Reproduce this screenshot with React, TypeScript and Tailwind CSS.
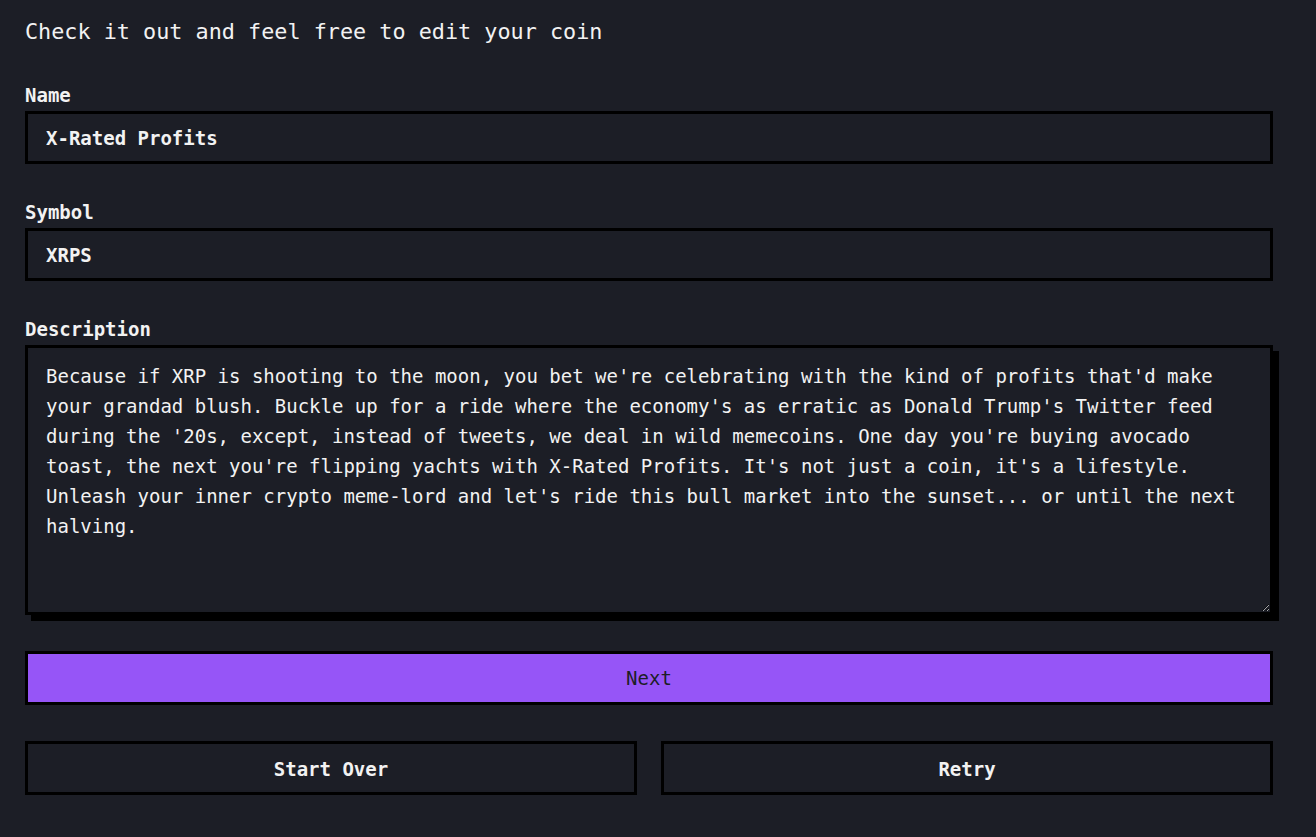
// Coin review step: edit the generated name, symbol and blurb before moving on.
const DESCRIPTION =
  "Because if XRP is shooting to the moon, you bet we're celebrating with the kind of profits that'd make your grandad blush. Buckle up for a ride where the economy's as erratic as Donald Trump's Twitter feed during the '20s, except, instead of tweets, we deal in wild memecoins. One day you're buying avocado toast, the next you're flipping yachts with X-Rated Profits. It's not just a coin, it's a lifestyle. Unleash your inner crypto meme-lord and let's ride this bull market into the sunset... or until the next halving.";

const mono = "font-['DejaVu_Sans_Mono',monospace]";

function Field({ label, value }: { label: string; value: string }) {
  return (
    <label className="flex flex-col gap-1">
      <span className="text-[19px] leading-6 font-semibold text-[#f2f2f2]">{label}</span>
      <input
        defaultValue={value}
        className={`${mono} h-[53px] border-[3px] border-black bg-[#1c1e26] px-[18px] pt-px text-[19px] font-semibold text-[#f2f2f2] outline-none`}
      />
    </label>
  );
}

export default function App() {
  return (
    <div className={`${mono} min-h-screen bg-[#1c1e26] pt-[17px] pr-[43px] pb-10 pl-[25px] text-[#f2f2f2]`}>
      <div className="flex flex-col gap-9">
        <h1 className="text-[21.8px] leading-[30px] font-normal">
          Check it out and feel free to edit your coin
        </h1>

        <Field label="Name" value="X-Rated Profits" />
        <Field label="Symbol" value="XRPS" />

        <label className="flex flex-col gap-1">
          <span className="text-[19px] leading-6 font-semibold">Description</span>
          <textarea
            defaultValue={DESCRIPTION}
            className={`${mono} h-[270px] border-[3px] border-black bg-[#1c1e26] px-[18px] pt-[13px] text-[19px] leading-[30px] text-[#f2f2f2] shadow-[6px_6px_0_#000] outline-none`}
          />
        </label>

        <button className="h-[54px] border-[3px] border-black bg-[#9655f7] text-[19px] text-[#1c1e26]">
          Next
        </button>

        <div className="grid grid-cols-2 gap-6">
          <button className="h-[54px] border-[3px] border-black pt-0.5 text-[19px] font-semibold">
            Start Over
          </button>
          <button className="h-[54px] border-[3px] border-black pt-0.5 text-[19px] font-semibold">
            Retry
          </button>
        </div>
      </div>
    </div>
  );
}
